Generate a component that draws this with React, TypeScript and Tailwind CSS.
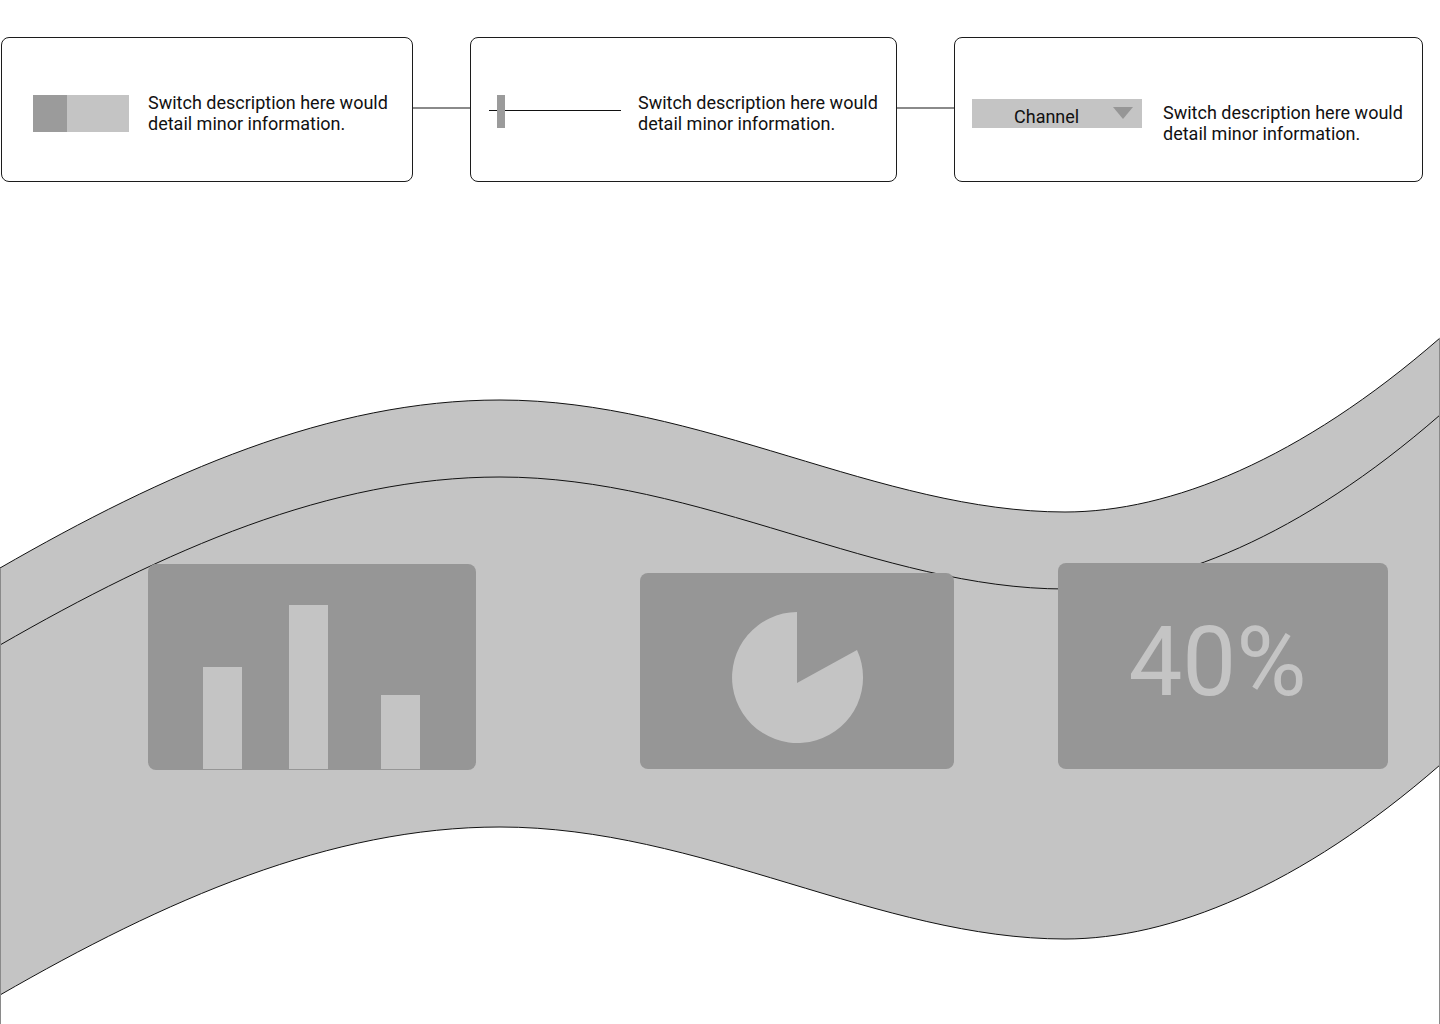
const TOP = "M0,568 C165,473 330,400 500,400 C700,400 880,512 1065,512 C1170,512 1300,460 1440,338";
const INNER = "M0,645 C165,550 330,477 500,477 C700,477 880,589 1065,589 C1170,589 1300,537 1440,415";
const BOTTOM = "M0,995 C165,900 330,827 500,827 C700,827 880,939 1065,939 C1170,939 1300,887 1440,765";
const BAND =
  "M0,568 C165,473 330,400 500,400 C700,400 880,512 1065,512 C1170,512 1300,460 1440,338 " +
  "L1440,765 C1300,887 1170,939 1065,939 C880,939 700,827 500,827 C330,827 165,900 0,995 Z";

function Description() {
  return (
    <p className="text-[18px] leading-[21px] text-[#111111] whitespace-nowrap">
      Switch description here would
      <br />
      detail minor information.
    </p>
  );
}

function Connector() {
  return <div className="mt-[70px] h-[2px] w-[57px] shrink-0 bg-[#8a8a8a]" />;
}

function ToggleCard() {
  return (
    <div className="flex h-[145px] w-[412px] shrink-0 items-center rounded-lg border border-[#1c1c1c] pl-[31px] pt-[7px]">
      <div className="flex h-[37px] w-[96px] shrink-0">
        <div className="w-[34px] bg-[#9b9b9b]" />
        <div className="flex-1 bg-[#c4c4c4]" />
      </div>
      <div className="ml-[19px]">
        <Description />
      </div>
    </div>
  );
}

function SliderCard() {
  return (
    <div className="flex h-[145px] w-[427px] shrink-0 items-center rounded-lg border border-[#1c1c1c] pl-[18px] pt-[7px]">
      <div className="relative mb-[3px] h-[33px] w-[132px] shrink-0">
        <div className="absolute left-0 right-0 top-[15px] h-px bg-[#111111]" />
        <div className="absolute left-[8px] top-0 h-[33px] w-[8px] bg-[#9b9b9b]" />
      </div>
      <div className="ml-[17px]">
        <Description />
      </div>
    </div>
  );
}

function SelectCard() {
  return (
    <div className="flex h-[145px] w-[469px] shrink-0 items-start rounded-lg border border-[#1c1c1c] pl-[17px] pt-[61px]">
      <div className="flex h-[29px] w-[170px] shrink-0 items-start bg-[#c4c4c4] pl-[42px] pt-[7px]">
        <span className="text-[18px] leading-[21px] text-[#111111]">Channel</span>
        <svg className="ml-auto mr-[9px] mt-px" width="20" height="12" viewBox="0 0 20 12">
          <polygon points="0,0 20,0 10,12" fill="#969696" />
        </svg>
      </div>
      <div className="ml-[21px] mt-[3px]">
        <Description />
      </div>
    </div>
  );
}

function BarCard() {
  return (
    <div className="mt-px flex h-[206px] w-[328px] shrink-0 items-end rounded-lg bg-[#969696] pb-px pl-[55px]">
      <div className="h-[102px] w-[39px] bg-[#c4c4c4]" />
      <div className="ml-[47px] h-[164px] w-[39px] bg-[#c4c4c4]" />
      <div className="ml-[53px] h-[74px] w-[39px] bg-[#c4c4c4]" />
    </div>
  );
}

function PieCard() {
  return (
    <div className="ml-[164px] mt-[10px] h-[196px] w-[314px] shrink-0 rounded-lg bg-[#969696]">
      <svg width="314" height="196" viewBox="0 0 314 196">
        <path
          d="M157,39 L157,110 L217,77 A65.5,65.5 0 1 1 157,39 Z"
          fill="#c4c4c4"
        />
      </svg>
    </div>
  );
}

function StatCard() {
  return (
    <div className="ml-[104px] flex h-[206px] w-[330px] shrink-0 items-center justify-center rounded-lg bg-[#969696] pb-[9px] pr-[11px]">
      <span className="text-[96px] font-normal leading-none text-[#c4c4c4]">40%</span>
    </div>
  );
}

export default function App() {
  return (
    <div className="relative h-[1024px] w-[1440px] overflow-hidden bg-white font-['Roboto',sans-serif]">
      <svg
        className="absolute inset-0"
        width="1440"
        height="1024"
        viewBox="0 0 1440 1024"
      >
        <path d={BAND} fill="#c4c4c4" />
        <path d={TOP} fill="none" stroke="#111111" strokeWidth="1" />
        <path d={INNER} fill="none" stroke="#111111" strokeWidth="1" />
        <path d={BOTTOM} fill="none" stroke="#111111" strokeWidth="1" />
        <line x1="0.5" y1="568" x2="0.5" y2="1024" stroke="#8a8a8a" strokeWidth="1" />
        <line x1="1439.5" y1="338" x2="1439.5" y2="1024" stroke="#8a8a8a" strokeWidth="1" />
      </svg>

      <div className="relative flex items-start pl-px pt-[37px]">
        <ToggleCard />
        <Connector />
        <SliderCard />
        <Connector />
        <SelectCard />
      </div>

      <div className="relative mt-[381px] flex items-start pl-[148px]">
        <BarCard />
        <PieCard />
        <StatCard />
      </div>
    </div>
  );
}
